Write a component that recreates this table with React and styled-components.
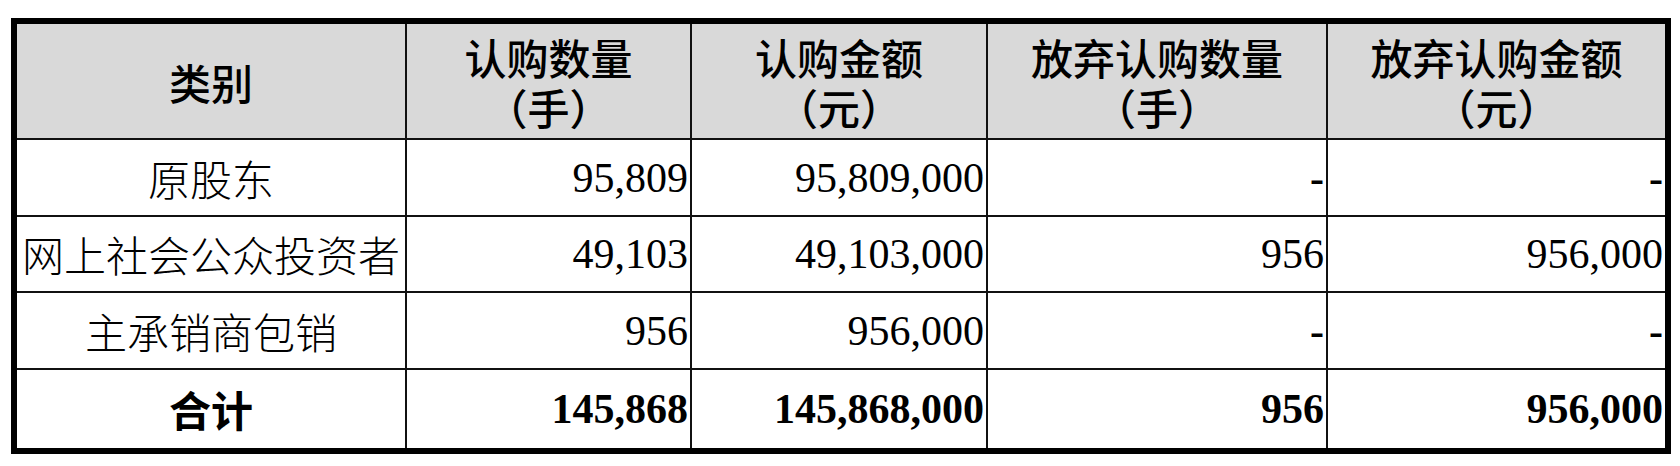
import React from "react";
import styled, { createGlobalStyle } from "styled-components";

const GlobalStyle = createGlobalStyle`
  html, body { margin: 0; padding: 0; background: #ffffff; }
  body { width: 1680px; height: 466px; overflow: hidden; }
`;

const Page = styled.div`
  padding: 18px 0 0 11px;
`;

const Table = styled.div`
  box-sizing: border-box;
  width: 1660px;
  border: 6px solid #000;
  display: grid;
  grid-template-columns: 390px 285px 296px 340px 337px;
  grid-template-rows: 116px 77px 76px 77px 78px;
  color: #000;
`;

const Cell = styled.div`
  box-sizing: border-box;
  display: flex;
  align-items: center;
  justify-content: ${(p) => (p.$align === "right" ? "flex-end" : "center")};
  text-align: ${(p) => (p.$align === "right" ? "right" : "center")};
  padding: ${(p) => (p.$align === "right" ? "0 2px 0 0" : "0")};
  background: ${(p) => (p.$head ? "#d9d9d9" : "#ffffff")};
  border-right: ${(p) => (p.$lastCol ? "none" : "2px solid #111")};
  border-bottom: ${(p) => (p.$lastRow ? "none" : "2px solid #111")};
  font-family: ${(p) =>
    p.$num
      ? '"Liberation Serif", "Times New Roman", serif'
      : '"Noto Sans CJK SC", "Noto Sans", sans-serif'};
  font-size: 42px;
  font-weight: ${(p) => (p.$bold ? 700 : p.$num ? 400 : 300)};
  line-height: 48px;
  white-space: nowrap;
  letter-spacing: 0;
`;

const HeadText = styled.span`
  display: flex;
  flex-direction: column;
  align-items: center;
  font-weight: 500;
  line-height: 52px;
  padding-top: 2px;
`;

const HeadLine = styled.span`
  display: block;
  height: 50px;
  line-height: 50px;
`;

const headers = [
  ["类别"],
  ["认购数量", "（手）"],
  ["认购金额", "（元）"],
  ["放弃认购数量", "（手）"],
  ["放弃认购金额", "（元）"],
];

const rows = [
  { name: "原股东", vals: ["95,809", "95,809,000", "-", "-"] },
  { name: "网上社会公众投资者", vals: ["49,103", "49,103,000", "956", "956,000"] },
  { name: "主承销商包销", vals: ["956", "956,000", "-", "-"] },
  { name: "合计", vals: ["145,868", "145,868,000", "956", "956,000"], total: true },
];

export default function App() {
  return (
    <>
      <GlobalStyle />
      <Page>
        <Table>
          {headers.map((h, i) => (
            <Cell key={"h" + i} $head $lastCol={i === headers.length - 1}>
              <HeadText>
                {h.map((line, j) => (
                  <HeadLine key={j}>{line}</HeadLine>
                ))}
              </HeadText>
            </Cell>
          ))}
          {rows.map((r, ri) => {
            const lastRow = ri === rows.length - 1;
            return (
              <React.Fragment key={r.name}>
                <Cell $lastRow={lastRow} $bold={r.total}>
                  {r.name}
                </Cell>
                {r.vals.map((v, vi) => (
                  <Cell
                    key={vi}
                    $num
                    $align="right"
                    $bold={r.total || v === "-"}
                    $lastRow={lastRow}
                    $lastCol={vi === r.vals.length - 1}
                  >
                    {v}
                  </Cell>
                ))}
              </React.Fragment>
            );
          })}
        </Table>
      </Page>
    </>
  );
}
